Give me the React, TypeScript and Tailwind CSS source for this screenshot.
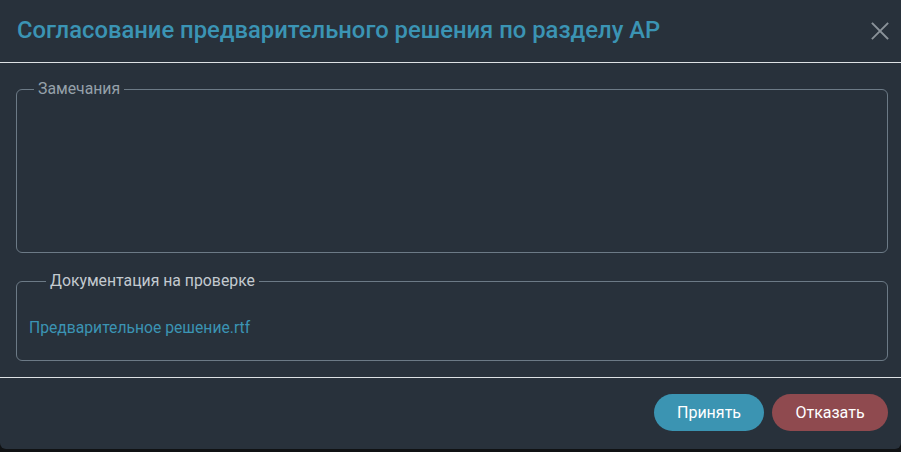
import React from "react";

export default function App() {
  return (
    <div className="w-[901px] h-[452px] bg-[#101214]" style={{ fontFamily: "Roboto, 'Noto Sans', sans-serif" }}>
      <div className="w-[901px] h-[449px] bg-[#28313b] rounded-b-[6px] flex flex-col">
        <div className="h-[62px] flex items-center justify-between pl-[17px] pr-[13px]">
          <h1 className="text-[23.8px] font-medium text-[#3b94b4] leading-none">
            Согласование предварительного решения по разделу АР
          </h1>
          <svg width="18" height="18" viewBox="0 0 18 18" className="mr-[-1px]">
            <path d="M1.5 1.5 L16.5 16.5 M16.5 1.5 L1.5 16.5" stroke="#8a9299" strokeWidth="1.8" strokeLinecap="square" />
          </svg>
        </div>
        <div className="h-px bg-[#dde1e4]" />
        <div className="pl-[16px] pr-[13px] pt-[16px] pb-[16px] flex flex-col gap-[18px]">
          <fieldset className="border border-[#6c7a86] rounded-[6px] px-[12px] py-0 m-0 min-w-0">
            <legend className="ml-[5px] px-[4px] text-[15.8px] leading-[20px] text-[#96a1aa]">Замечания</legend>
            <div className="h-[153px]" />
          </fieldset>
          <fieldset className="border border-[#6c7a86] rounded-[6px] px-[12px] py-0 m-0 min-w-0">
            <legend className="ml-[17px] px-[4px] text-[15.8px] leading-[20px] text-[#c3cad0]">Документация на проверке</legend>
            <div className="pt-[25px] pb-[20px]">
              <a className="text-[15.7px] leading-[20px] text-[#3b94b4] cursor-pointer">Предварительное решение.rtf</a>
            </div>
          </fieldset>
        </div>
        <div className="h-px bg-[#dde1e4]" />
        <div className="flex justify-end gap-[8px] pt-[16px] pr-[13px]">
          <button className="w-[110px] h-[37px] rounded-full bg-[#3b94b2] text-white text-[16px]">Принять</button>
          <button className="w-[116px] h-[37px] rounded-full bg-[#8f4a4f] text-white text-[16px]">Отказать</button>
        </div>
      </div>
    </div>
  );
}
